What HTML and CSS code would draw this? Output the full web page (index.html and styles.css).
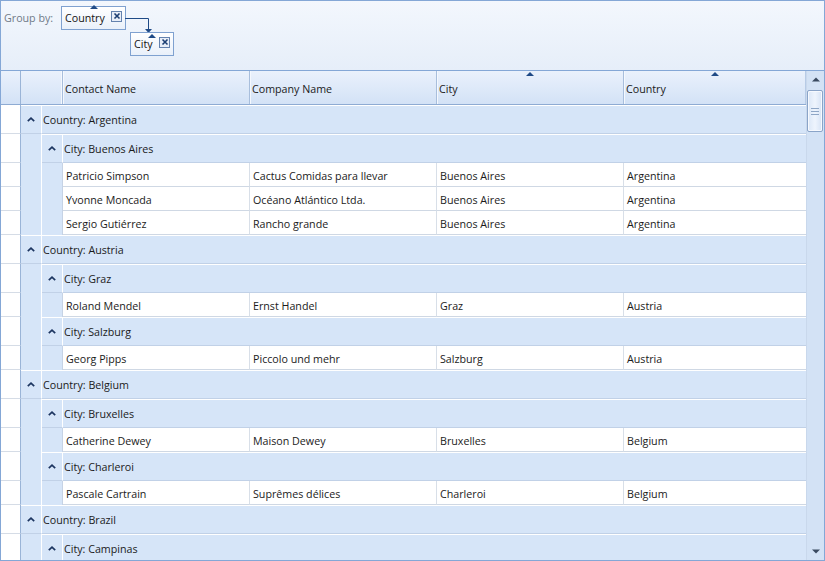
FILE: index.html
```html
<!DOCTYPE html>
<html>
<head>
<meta charset="utf-8">
<link rel="stylesheet" href="styles.css">
</head>
<body>
<div class="frame">
  <div class="grouppanel">
    <div class="gp-label">Group by:</div>
    <div class="gp-boxes">
      <div class="gbox gbox-country">
        <span class="sortup"></span>
        <span class="gbox-text">Country</span>
        <span class="xbtn"><svg width="8" height="8" viewBox="0 0 8 8"><path d="M1.5 1.5 L6.5 6.5 M6.5 1.5 L1.5 6.5" stroke="#1d3f73" stroke-width="1.6"/></svg></span>
      </div>
      <svg class="connector" width="30" height="16" viewBox="0 0 30 16"><path d="M0 0.5 H23.5 V12" stroke="#1f4a86" stroke-width="1" fill="none"/><path d="M20 11 H27 L23.5 15 Z" fill="#1f4a86"/></svg>
      <div class="gbox gbox-city">
        <span class="sortup"></span>
        <span class="gbox-text">City</span>
        <span class="xbtn"><svg width="8" height="8" viewBox="0 0 8 8"><path d="M1.5 1.5 L6.5 6.5 M6.5 1.5 L1.5 6.5" stroke="#1d3f73" stroke-width="1.6"/></svg></span>
      </div>
    </div>
  </div>
  <div class="gridarea">
    <div class="gridmain">
      <div class="header">
        <div class="h-ind"></div>
        <div class="h-pad"></div>
        <div class="hcell c1">Contact Name</div>
        <div class="hcell c2">Company Name</div>
        <div class="hcell c3"><span class="hsort"></span>City</div>
        <div class="hcell c4"><span class="hsort"></span>Country</div>
      </div>
      <div class="body">
        <div class="row grp l1"><div class="ind"></div><div class="exp"><svg width="8" height="5" viewBox="0 0 8 5"><path d="M0.8 4.2 L4 1.2 L7.2 4.2" stroke="#1c3560" stroke-width="1.7" fill="none"/></svg></div><div class="gtext">Country: Argentina</div></div>
        <div class="row grp l2"><div class="ind"></div><div class="pad"></div><div class="exp"><svg width="8" height="5" viewBox="0 0 8 5"><path d="M0.8 4.2 L4 1.2 L7.2 4.2" stroke="#1c3560" stroke-width="1.7" fill="none"/></svg></div><div class="gtext">City: Buenos Aires</div></div>
        <div class="row data"><div class="ind"></div><div class="pad"></div><div class="pad2"></div><div class="cell c1">Patricio Simpson</div><div class="cell c2">Cactus Comidas para llevar</div><div class="cell c3">Buenos Aires</div><div class="cell c4">Argentina</div></div>
        <div class="row data"><div class="ind"></div><div class="pad"></div><div class="pad2"></div><div class="cell c1">Yvonne Moncada</div><div class="cell c2">Océano Atlántico Ltda.</div><div class="cell c3">Buenos Aires</div><div class="cell c4">Argentina</div></div>
        <div class="row data"><div class="ind"></div><div class="pad"></div><div class="pad2"></div><div class="cell c1">Sergio Gutiérrez</div><div class="cell c2">Rancho grande</div><div class="cell c3">Buenos Aires</div><div class="cell c4">Argentina</div></div>

        <div class="row grp l1"><div class="ind"></div><div class="exp"><svg width="8" height="5" viewBox="0 0 8 5"><path d="M0.8 4.2 L4 1.2 L7.2 4.2" stroke="#1c3560" stroke-width="1.7" fill="none"/></svg></div><div class="gtext">Country: Austria</div></div>
        <div class="row grp l2"><div class="ind"></div><div class="pad"></div><div class="exp"><svg width="8" height="5" viewBox="0 0 8 5"><path d="M0.8 4.2 L4 1.2 L7.2 4.2" stroke="#1c3560" stroke-width="1.7" fill="none"/></svg></div><div class="gtext">City: Graz</div></div>
        <div class="row data"><div class="ind"></div><div class="pad"></div><div class="pad2"></div><div class="cell c1">Roland Mendel</div><div class="cell c2">Ernst Handel</div><div class="cell c3">Graz</div><div class="cell c4">Austria</div></div>
        <div class="row grp l2"><div class="ind"></div><div class="pad"></div><div class="exp"><svg width="8" height="5" viewBox="0 0 8 5"><path d="M0.8 4.2 L4 1.2 L7.2 4.2" stroke="#1c3560" stroke-width="1.7" fill="none"/></svg></div><div class="gtext">City: Salzburg</div></div>
        <div class="row data"><div class="ind"></div><div class="pad"></div><div class="pad2"></div><div class="cell c1">Georg Pipps</div><div class="cell c2">Piccolo und mehr</div><div class="cell c3">Salzburg</div><div class="cell c4">Austria</div></div>

        <div class="row grp l1"><div class="ind"></div><div class="exp"><svg width="8" height="5" viewBox="0 0 8 5"><path d="M0.8 4.2 L4 1.2 L7.2 4.2" stroke="#1c3560" stroke-width="1.7" fill="none"/></svg></div><div class="gtext">Country: Belgium</div></div>
        <div class="row grp l2"><div class="ind"></div><div class="pad"></div><div class="exp"><svg width="8" height="5" viewBox="0 0 8 5"><path d="M0.8 4.2 L4 1.2 L7.2 4.2" stroke="#1c3560" stroke-width="1.7" fill="none"/></svg></div><div class="gtext">City: Bruxelles</div></div>
        <div class="row data"><div class="ind"></div><div class="pad"></div><div class="pad2"></div><div class="cell c1">Catherine Dewey</div><div class="cell c2">Maison Dewey</div><div class="cell c3">Bruxelles</div><div class="cell c4">Belgium</div></div>
        <div class="row grp l2"><div class="ind"></div><div class="pad"></div><div class="exp"><svg width="8" height="5" viewBox="0 0 8 5"><path d="M0.8 4.2 L4 1.2 L7.2 4.2" stroke="#1c3560" stroke-width="1.7" fill="none"/></svg></div><div class="gtext">City: Charleroi</div></div>
        <div class="row data"><div class="ind"></div><div class="pad"></div><div class="pad2"></div><div class="cell c1">Pascale Cartrain</div><div class="cell c2">Suprêmes délices</div><div class="cell c3">Charleroi</div><div class="cell c4">Belgium</div></div>

        <div class="row grp l1"><div class="ind"></div><div class="exp"><svg width="8" height="5" viewBox="0 0 8 5"><path d="M0.8 4.2 L4 1.2 L7.2 4.2" stroke="#1c3560" stroke-width="1.7" fill="none"/></svg></div><div class="gtext">Country: Brazil</div></div>
        <div class="row grp l2"><div class="ind"></div><div class="pad"></div><div class="exp"><svg width="8" height="5" viewBox="0 0 8 5"><path d="M0.8 4.2 L4 1.2 L7.2 4.2" stroke="#1c3560" stroke-width="1.7" fill="none"/></svg></div><div class="gtext">City: Campinas</div></div>
      </div>
    </div>
    <div class="vscroll">
      <div class="sb-btn"><svg width="8" height="5" viewBox="0 0 8 5"><path d="M0 4.5 L4 0.5 L8 4.5 Z" fill="#3a4a60"/></svg></div>
      <div class="sb-track">
        <div class="sb-thumb"><span class="grip"></span><span class="grip"></span><span class="grip"></span></div>
      </div>
      <div class="sb-btn"><svg width="8" height="5" viewBox="0 0 8 5"><path d="M0 0.5 L8 0.5 L4 4.5 Z" fill="#3a4a60"/></svg></div>
    </div>
  </div>
</div>
</body>
</html>
```

FILE: styles.css
```css
* { box-sizing: border-box; }
html, body { margin: 0; padding: 0; }
body {
  width: 825px;
  height: 561px;
  overflow: hidden;
  background: #ffffff;
  font-family: "Open Sans", "Liberation Sans", sans-serif;
  font-size: 10.7px;
  color: #1b1b1b;
}
.frame {
  width: 825px;
  height: 561px;
  border: 1px solid #84a7d6;
  display: flex;
  flex-direction: column;
  overflow: hidden;
}
.grouppanel {
  height: 70px;
  flex: none;
  border-bottom: 1px solid #84a7d6;
  background: linear-gradient(#f3f7fd, #e6eef9);
  display: flex;
  align-items: flex-start;
  padding: 0 0 0 3px;
  position: relative;
}
.gp-label {
  color: #707a88;
  margin-top: 10px;
  width: 57px;
}
.gp-boxes {
  position: relative;
  flex: 1;
  height: 100%;
}
.gbox {
  position: absolute;
  height: 24px;
  border: 1px solid #7fa1d0;
  background: linear-gradient(#ffffff, #e9f0fa);
  display: flex;
  align-items: center;
  padding: 0 3px 0 3px;
  color: #141414;
}
.gbox-country { left: 0; top: 5px; width: 65px; }
.gbox-city { left: 69px; top: 31px; width: 44px; }
.gbox-text { flex: 1; margin-top: -1px; }
.xbtn {
  width: 11px;
  height: 11px;
  border: 1px solid #6482ae;
  background: #e8eef8;
  display: flex;
  align-items: center;
  justify-content: center;
  margin-top: -4px;
}
.sortup {
  position: absolute;
  top: -1px;
  left: 50%;
  margin-left: -4px;
  width: 0;
  height: 0;
  border-left: 4px solid transparent;
  border-right: 4px solid transparent;
  border-bottom: 4px solid #1f4a86;
}
.gbox-city .sortup { left: 21px; top: 1px; }
.gbox-country .sortup { left: 32px; top: -2px; }
.connector {
  position: absolute;
  left: 64px;
  top: 17px;
}
.gridarea {
  flex: 1;
  display: flex;
  min-height: 0;
}
.gridmain {
  width: 805px;
  display: flex;
  flex-direction: column;
  min-height: 0;
}
.header {
  height: 34px;
  flex: none;
  display: flex;
  background: linear-gradient(#eaf1fc, #d3e2f6);
  border-bottom: 1px solid #8eabd3;
}
.h-ind {
  width: 20px;
  border-right: 1px solid #9ab4d7;
}
.h-pad {
  width: 42px;
  border-right: 1px solid #a8bedc;
  box-shadow: inset -1px 0 0 #f4f8fe;
}
.hcell {
  position: relative;
  display: flex;
  align-items: center;
  padding: 0 3px 0 2px;
  border-right: 1px solid #a8bedc;
  box-shadow: inset 1px 0 0 #f4f8fe;
  padding-top: 2px;
}
.c1 { width: 187px; }
.c2 { width: 187px; }
.c3 { width: 187px; }
.c4 { width: 182px; }
.hcell.c4 { border-right: 1px solid #b7cbe6; }
.hsort {
  position: absolute;
  top: 1px;
  left: 50%;
  margin-left: -4px;
  width: 0;
  height: 0;
  border-left: 4px solid transparent;
  border-right: 4px solid transparent;
  border-bottom: 4px solid #1f4a86;
}
.body {
  flex: 1;
  overflow: hidden;
  min-height: 0;
}
.row {
  display: flex;
}
.ind {
  width: 20px;
  flex: none;
  background: #ffffff;
  border-right: 1px solid #9ab4d7;
  border-bottom: 1px solid #d5dce6;
}
.grp { height: 29px; }
.data { height: 24px; }
.pad {
  width: 21px;
  flex: none;
  background: #d6e5f8;
  border-right: 1px solid #ffffff;
}
.pad2 {
  width: 21px;
  flex: none;
  background: #d6e5f8;
  border-right: 1px solid #c6d3e5;
}
.exp {
  width: 21px;
  flex: none;
  background: #d6e5f8;
  border-top: 1px solid #ffffff;
  border-bottom: 1px solid #c1d1e7;
  border-right: 1px solid #ffffff;
  display: flex;
  align-items: center;
  justify-content: center;
  padding-bottom: 1px;
}
.gtext {
  flex: 1;
  background: #d6e5f8;
  border-top: 1px solid #ffffff;
  border-bottom: 1px solid #c1d1e7;
  display: flex;
  align-items: center;
  padding-left: 1px;
  color: #1b1b1b;
}
.cell {
  flex: none;
  display: flex;
  align-items: center;
  padding-left: 3px;
  padding-top: 2px;
  border-right: 1px solid #d8dfe8;
  border-bottom: 1px solid #cfd8e4;
  white-space: nowrap;
  overflow: hidden;
}
.cell.c4 { border-right: none; }
.vscroll {
  width: 18px;
  flex: none;
  background: #d3e2f5;
  border-left: 1px solid #c9d8ec;
  display: flex;
  flex-direction: column;
}
.sb-btn {
  height: 17px;
  flex: none;
  display: flex;
  align-items: center;
  justify-content: center;
}
.sb-track {
  flex: 1;
  padding-top: 2px;
}
.sb-thumb {
  width: 16px;
  height: 42px;
  border: 1px solid #8aa4c8;
  border-radius: 2px;
  background: linear-gradient(90deg, #dbe7f7, #eef4fd 50%, #d6e3f5);
  box-shadow: inset 0 0 0 1px #f6f9fe;
  display: flex;
  flex-direction: column;
  align-items: center;
  justify-content: center;
  gap: 2px;
}
.grip {
  width: 8px;
  height: 1px;
  background: #8ea6c6;
}
```
